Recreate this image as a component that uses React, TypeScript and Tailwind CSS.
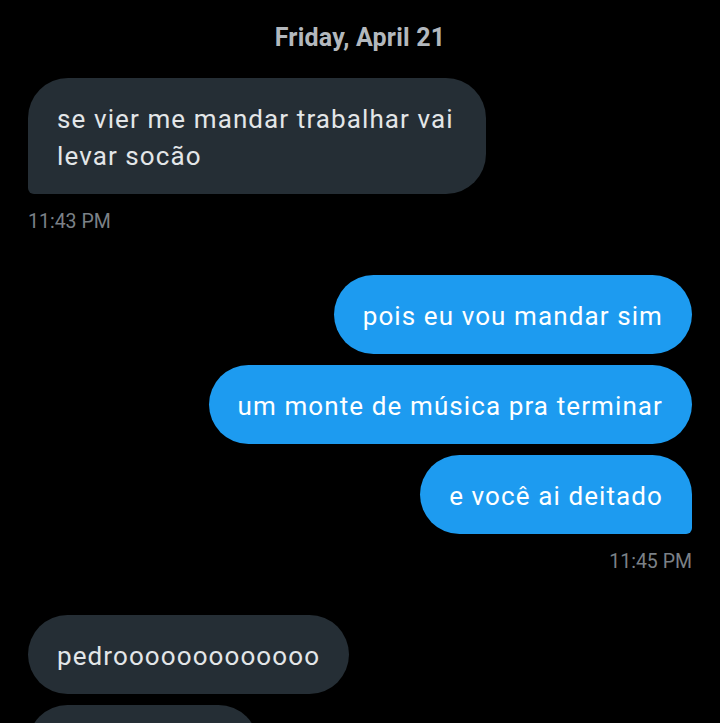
import React from 'react';

type Msg = { id: number; text: React.ReactNode; mine: boolean; last?: boolean; time?: string; cls?: string };

const messages: Msg[] = [
  { id: 1, text: 'se vier me mandar trabalhar vai levar socão', mine: false, last: true, time: '11:43 PM' },
  { id: 2, text: 'pois eu vou mandar sim', mine: true },
  { id: 3, text: 'um monte de música pra terminar', mine: true },
  { id: 4, text: 'e você ai deitado', mine: true, last: true, time: '11:45 PM' },
  { id: 5, text: 'pedrooooooooooooo', mine: false },
  { id: 6, text: 'acordaaaa', mine: false, cls: 'w-[230px]' },
];

const Bubble = ({ msg }: { msg: Msg }) => {
  const base = 'px-[29px] pt-[23px] pb-[19px] text-[26px] leading-[37px] tracking-[1.1px] rounded-[40px]';
  const color = msg.mine ? 'max-w-[520px] bg-[#1d9bf0] text-white' : 'max-w-[458px] bg-[#252e35] text-[#e3e6e8]';
  const corner = msg.last ? (msg.mine ? 'rounded-br-[6px]' : 'rounded-bl-[6px]') : '';
  return (
    <div className={`flex flex-col ${msg.mine ? 'items-end' : 'items-start'}`}>
      <div className={`${base} ${color} ${corner} ${msg.cls ?? ''}`}>{msg.text}</div>
      {msg.time && (
        <span className="mt-[16px] text-[19.5px] leading-[24px] text-[#7b8187]">{msg.time}</span>
      )}
    </div>
  );
};

export default function App() {
  return (
    <div className="w-[720px] h-[723px] overflow-hidden bg-black px-[28px]" style={{ fontFamily: 'Roboto, "Noto Sans", sans-serif' }}>
      <div className="pt-[22px] pb-[24px] text-center text-[25px] leading-[32px] font-bold tracking-[0.2px] text-[#b3b8bd]">
        Friday, April 21
      </div>
      <div className="flex flex-col">
        <Bubble msg={messages[0]} />
        <div className="mt-[41px] flex flex-col gap-[11px]">
          <Bubble msg={messages[1]} />
          <Bubble msg={messages[2]} />
          <Bubble msg={messages[3]} />
        </div>
        <div className="mt-[41px] flex flex-col gap-[11px]">
          <Bubble msg={messages[4]} />
          <Bubble msg={messages[5]} />
        </div>
      </div>
    </div>
  );
}
